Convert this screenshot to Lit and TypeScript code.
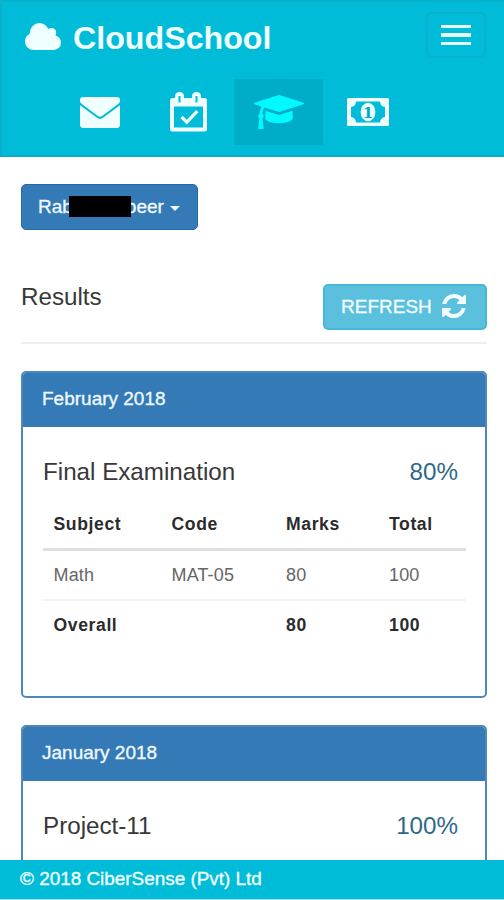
import { LitElement, html, css, svg, nothing } from "lit";
import { customElement, property } from "lit/decorators.js";

interface Row {
  subject: string;
  code: string;
  marks: string;
  total: string;
}

interface Exam {
  month: string;
  title: string;
  percent: string;
  rows: Row[];
  marks?: string;
  total?: string;
}

const exams: Exam[] = [
  {
    month: "February 2018",
    title: "Final Examination",
    percent: "80%",
    rows: [{ subject: "Math", code: "MAT-05", marks: "80", total: "100" }],
    marks: "80",
    total: "100",
  },
  { month: "January 2018", title: "Project-11", percent: "100%", rows: [] },
];

const cloud = svg`<svg width="36" height="27" viewBox="64 128 1920 1408" preserveAspectRatio="none" fill="currentColor"><path d="M1984 1152q0 159-112.5 271.5t-271.5 112.5h-1088q-185 0-316.5-131.5t-131.5-316.5q0-132 71-241.5t187-163.5q-2-28-2-43 0-212 150-362t362-150q158 0 286.5 88t187.5 230q70-62 166-62 106 0 181 75t75 181q0 75-41 138 129 30 213 134.5t84 239.5z"/></svg>`;

const mail = svg`<svg width="40" height="31" viewBox="0 0 40 31" fill="currentColor"><path d="M3.5 0h33Q40 0 40 3.2V4.4Q39.6 6 37.5 7.600L22.500 18.800Q20 20.600 17.500 18.800L2.500 7.600Q.4 6 0 4.400V3.200Q0 0 3.500 0z"/><path d="M0 8.200L17 20.800Q20 23 23 20.800L40 8.200V27.500Q40 31 36.500 31h-33Q0 31 0 27.500z"/></svg>`;

const calendar = svg`<svg width="37" height="40" viewBox="0 0 37 40"><path fill="currentColor" fill-rule="evenodd" d="M2.500 6H5V4.500Q5 0 9.500 0T14 4.500V6h8V4.500Q22 0 26.500 0T31 4.500V6h3.500Q37 6 37 8.500V37q0 2.500-2.500 2.500h-32Q0 39.500 0 37V8.500Q0 6 2.500 6zM4 14.500V35.500H33V14.500zM8.500 4v6.500h2V4zM25.500 4v6.500h2V4z"/><path d="M11.500 24.800l5.300 5.400 10.500-11" fill="none" stroke="currentColor" stroke-width="3.200"/></svg>`;

const cap = svg`<svg width="50" height="34" viewBox="0 128 2304 1536" preserveAspectRatio="none" fill="currentColor"><path d="M1774 836l18 316q4 69-82 128t-235 93.500-323 34.500-323-34.500-235-93.500-82-128l18-316 574 181q22 7 48 7t48-7zm530-324q0 23-22 31l-1120 352q-4 1-10 1t-10-1l-652-206q-43 34-71 111.500t-34 178.500q63 36 63 109 0 69-58 107l58 433q2 14-8 25-9 11-24 11h-192q-15 0-24-11-10-11-8-25l58-433q-58-38-58-107 0-73 65-111 11-207 98-330l-333-104q-22-8-22-31t22-31l1120-352q4-1 10-1t10 1l1120 352q22 8 22 31z"/></svg>`;

const money = svg`<svg width="42" height="28" viewBox="0 0 42 28"><path fill="currentColor" fill-rule="evenodd" d="M1.500 0h39Q42 0 42 1.500v25q0 1.500-1.500 1.500h-39Q0 28 0 26.500v-25Q0 0 1.500 0zM9 3.500Q8.500 8.500 4 9v10q4.500 .5 5 5.500h24q.5-5 5-5.500V9Q33.500 8.500 33 3.500z"/><ellipse cx="21" cy="14" rx="7.400" ry="9.200" fill="currentColor"/><text x="21" y="19.600" class="one" text-anchor="middle">1</text></svg>`;

const refresh = svg`<svg width="24" height="24" viewBox="128 128 1536 1536" fill="currentColor"><path d="M1639 1056q0 5-1 7-64 268-268 434.500t-478 166.500q-146 0-282.500-55t-243.500-157l-129 129q-19 19-45 19t-45-19-19-45v-448q0-26 19-45t45-19h448q26 0 45 19t19 45-19 45l-137 137q71 66 161 102t187 36q134 0 250-65t186-179q11-17 53-117 8-23 30-23h192q13 0 22.500 9.500t9.500 22.500zm25-800v448q0 26-19 45t-45 19h-448q-26 0-45-19t-19-45 19-45l138-138q-148-137-349-137-134 0-250 65t-186 179q-11 17-53 117-8 23-30 23h-199q-13 0-22.500-9.500t-9.500-22.500v-7q65-268 270-434.500t480-166.500q146 0 284 55.500t245 156.500l130-129q19-19 45-19t45 19 19 45z"/></svg>`;

@customElement("exam-card")
export class ExamCard extends LitElement {
  @property({ attribute: false }) exam!: Exam;

  static styles = css`
    :host {
      display: block;
      flex: none;
      box-sizing: border-box;
      border: 2px solid #5088ba;
      border-radius: 5px;
      background: #fff;
      overflow: hidden;
    }
    .head {
      height: 54px;
      line-height: 51px;
      padding-left: 19px;
      background: #337ab7;
      color: #f0f8ff;
      font-size: 19px;
      -webkit-text-stroke: 0.35px currentColor;
    }
    .body {
      padding: 27px 19px 46.5px 20px;
    }
    .title {
      display: flex;
      justify-content: space-between;
      padding-right: 8px;
      height: 35px;
      line-height: 36px;
      font-size: 24.2px;
      color: #383838;
    }
    .percent {
      color: #2d6987;
    }
    .grid {
      margin-top: 10px;
      font-size: 18px;
      color: #666;
      letter-spacing: 0.15px;
    }
    .row {
      box-sizing: border-box;
      display: grid;
      grid-template-columns: 118px 114.5px 103px 1fr;
      padding-left: 10.5px;
      height: 50px;
      line-height: 48px;
      border-bottom: 2px solid #f3f3f3;
    }
    .row.top {
      height: 52px;
      line-height: 50px;
      border-bottom: 3px solid #dfdfdf;
    }
    .row.strong {
      font-weight: bold;
      font-size: 17.6px;
      letter-spacing: 0.6px;
      color: #2b2b2b;
    }
    .row.last {
      border: 0;
      height: 48px;
      line-height: 48px;
    }
  `;

  render() {
    const e = this.exam;
    return html`
      <div class="head">${e.month}</div>
      <div class="body">
        <div class="title"><span>${e.title}</span><span class="percent">${e.percent}</span></div>
        ${e.rows.length
          ? html`<div class="grid">
              <div class="row top strong">
                <span>Subject</span><span>Code</span><span>Marks</span><span>Total</span>
              </div>
              ${e.rows.map(
                (r) => html`<div class="row">
                  <span>${r.subject}</span><span>${r.code}</span><span>${r.marks}</span><span>${r.total}</span>
                </div>`
              )}
              <div class="row strong last">
                <span>Overall</span><span></span><span>${e.marks}</span><span>${e.total}</span>
              </div>
            </div>`
          : nothing}
      </div>
    `;
  }
}

@customElement("app-root")
export class AppRoot extends LitElement {
  static styles = css`
    :host {
      display: flex;
      flex-direction: column;
      height: 900px;
      overflow: hidden;
      background: #fff;
      font-family: "Liberation Sans", Arial, sans-serif;
    }
    svg {
      display: block;
      flex: none;
    }
    header {
      flex: none;
      box-sizing: border-box;
      height: 157px;
      background: #00bcd9;
      color: #effeff;
      border-bottom: 2px solid #0eacc5;
      box-shadow: inset 2px 2px 1px #07b1cc;
    }
    .bar {
      display: flex;
      justify-content: space-between;
      height: 79px;
      padding: 0 18px 0 25px;
    }
    .brand {
      display: flex;
      gap: 12px;
      padding-top: 23px;
      font-size: 32.2px;
      font-weight: bold;
      line-height: 30px;
    }
    .burger {
      box-sizing: border-box;
      display: flex;
      flex-direction: column;
      align-items: center;
      justify-content: center;
      gap: 5px;
      width: 60px;
      height: 46px;
      margin-top: 12px;
      border: 2px solid #08b2cd;
      border-radius: 6px;
    }
    .burger i {
      width: 30px;
      height: 3.4px;
      background: #e4fdff;
    }
    nav {
      display: flex;
      padding-left: 55px;
    }
    .tab {
      display: flex;
      align-items: center;
      justify-content: center;
      width: 89px;
      height: 66px;
    }
    .tab.active {
      margin-left: 1px;
      background: #00adc8;
      color: #02faff;
    }
    .one {
      font: bold 15px "DejaVu Serif", serif;
      fill: #00a9c4;
    }
    main {
      flex: 1;
      min-height: 0;
      overflow: hidden;
      display: flex;
      flex-direction: column;
      padding: 27px 17px 0 21px;
    }
    .picker {
      box-sizing: border-box;
      align-self: flex-start;
      display: flex;
      align-items: center;
      flex: none;
      width: 177px;
      height: 46px;
      padding: 0 0 1px 16px;
      border: 1px solid #2469a6;
      border-radius: 5px;
      background: #337ab7;
      color: #f4faff;
      font-size: 19px;
      -webkit-text-stroke: 0.3px currentColor;
    }
    .mask {
      width: 62px;
      height: 21px;
      margin: 0 -5px 0 -4px;
      background: #000;
      z-index: 1;
    }
    .caret {
      margin: 4px 0 0 6px;
      border: 5px solid transparent;
      border-top-color: currentColor;
      border-bottom: 0;
    }
    .heading {
      flex: none;
      box-sizing: border-box;
      display: flex;
      justify-content: space-between;
      margin-top: 54px;
      height: 60px;
      border-bottom: 2px solid #f0f0f0;
      font-size: 24.2px;
      line-height: 26px;
      color: #383838;
    }
    .refresh {
      box-sizing: border-box;
      display: flex;
      align-items: center;
      gap: 10px;
      width: 164px;
      height: 46px;
      padding: 0 0 1px 16px;
      border: 2px solid #46b8d5;
      border-radius: 5px;
      background: #5bc0de;
      color: #f3fdff;
      font-size: 19px;
      -webkit-text-stroke: 0.3px currentColor;
    }
    .refresh svg {
      margin-bottom: 2px;
    }
    .cards {
      display: flex;
      flex-direction: column;
      gap: 27px;
      margin-top: 27px;
    }
    footer {
      flex: none;
      box-sizing: border-box;
      height: 40px;
      padding-left: 20px;
      line-height: 38px;
      background: #00bcd9;
      border-bottom: 1px solid #a5e4ee;
      color: #effeff;
      font-size: 18.9px;
      -webkit-text-stroke: 0.35px currentColor;
    }
  `;

  render() {
    return html`
      <header>
        <div class="bar">
          <div class="brand">${cloud}<span>CloudSchool</span></div>
          <div class="burger"><i></i><i></i><i></i></div>
        </div>
        <nav>
          <div class="tab">${mail}</div>
          <div class="tab">${calendar}</div>
          <div class="tab active">${cap}</div>
          <div class="tab">${money}</div>
        </nav>
      </header>
      <main>
        <div class="picker">
          <span>Rab</span><span class="mask"></span><span>beer</span><span class="caret"></span>
        </div>
        <div class="heading">
          <span>Results</span>
          <div class="refresh"><span>REFRESH</span>${refresh}</div>
        </div>
        <div class="cards">
          ${exams.map((e) => html`<exam-card .exam=${e}></exam-card>`)}
        </div>
      </main>
      <footer>© 2018 CiberSense (Pvt) Ltd</footer>
    `;
  }
}
